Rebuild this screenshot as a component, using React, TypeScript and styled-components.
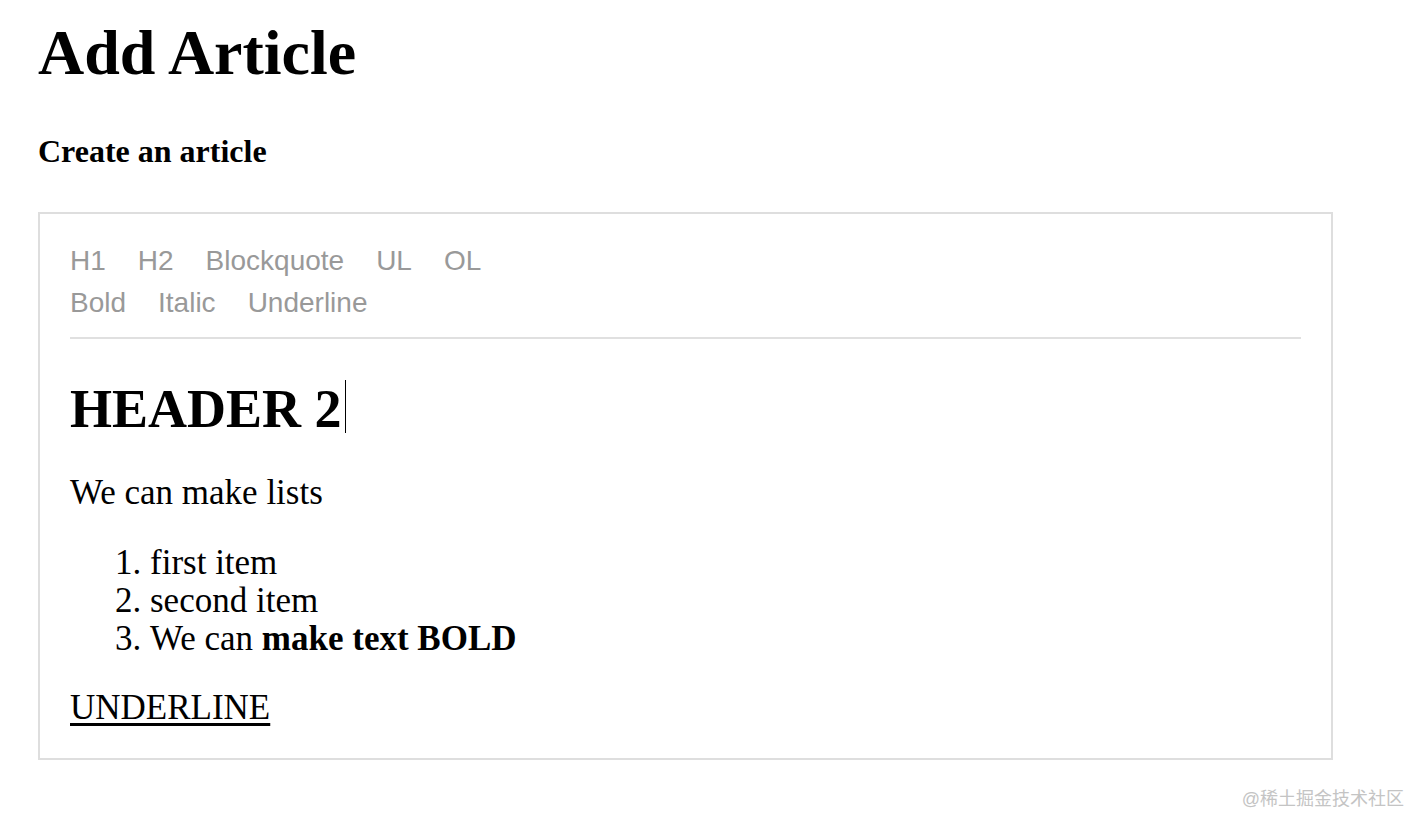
import React from 'react'
import styled, { createGlobalStyle } from 'styled-components'

const GlobalStyle = createGlobalStyle`
  html, body {
    margin: 0;
    padding: 0;
    background: #fff;
  }
  body {
    font-family: 'Liberation Serif', 'Times New Roman', serif;
    color: #000;
  }
`

const blockTypes = ['H1', 'H2', 'Blockquote', 'UL', 'OL']
const inlineStyles = ['Bold', 'Italic', 'Underline']

const App = () => {
  return (
    <>
      <GlobalStyle />
      <Page>
        <Title>Add Article</Title>
        <Subtitle>Create an article</Subtitle>
        <EditorBox>
          <Toolbar>
            <ToolRow>
              {blockTypes.map((label) => (
                <ToolButton key={label}>{label}</ToolButton>
              ))}
            </ToolRow>
            <ToolRow>
              {inlineStyles.map((label) => (
                <ToolButton key={label}>{label}</ToolButton>
              ))}
            </ToolRow>
          </Toolbar>
          <Content>
            <Heading>
              HEADER 2<Caret />
            </Heading>
            <Para>We can make lists</Para>
            <List>
              <li>first item</li>
              <li>second item</li>
              <li>
                We can <strong>make text BOLD</strong>
              </li>
            </List>
            <Para>
              <u>UNDERLINE</u>
            </Para>
          </Content>
        </EditorBox>
        <Watermark>@稀土掘金技术社区</Watermark>
      </Page>
    </>
  )
}

const Page = styled.div`
  position: relative;
  width: 1410px;
  height: 816px;
  box-sizing: border-box;
  padding: 15px 0 0 38px;
  overflow: hidden;
`

const Title = styled.h1`
  font-size: 64px;
  line-height: 76px;
  font-weight: 700;
  margin: 0;
`

const Subtitle = styled.h4`
  font-size: 32px;
  line-height: 38px;
  font-weight: 700;
  margin: 41px 0 42px;
`

const EditorBox = styled.div`
  width: 1295px;
  box-sizing: border-box;
  border: 2px solid #dedede;
  padding: 0 30px 31px;
`

const Toolbar = styled.div`
  padding: 26px 0 13px;
  border-bottom: 2px solid #e0e0e0;
`

const ToolRow = styled.div`
  display: flex;
  font-family: 'Liberation Sans', Arial, sans-serif;
  font-size: 28px;
  line-height: 42px;
`

const ToolButton = styled.span`
  color: #999;
  margin-right: 32px;
  cursor: pointer;
`

const Content = styled.div`
  font-family: 'Liberation Serif', Georgia, serif;
  font-size: 35px;
  line-height: 38px;
`

const Heading = styled.h2`
  font-size: 54px;
  line-height: 60px;
  font-weight: 700;
  margin: 40px 0 35px;
`

const Caret = styled.span`
  display: inline-block;
  width: 0;
  height: 53px;
  margin-left: 3px;
  border-left: 1.5px solid #000;
  vertical-align: -6px;
`

const Para = styled.p`
  margin: 0 0 32px;
  &:last-child {
    margin-bottom: 0;
  }
  u {
    text-underline-offset: 4px;
  }
`

const List = styled.ol`
  margin: 0 0 31px;
  padding-left: 80px;
`

const Watermark = styled.div`
  position: absolute;
  right: 6px;
  bottom: 6px;
  font-family: 'Liberation Sans', 'Noto Sans CJK SC', sans-serif;
  font-size: 18px;
  color: #c4c4c4;
`

export default App
